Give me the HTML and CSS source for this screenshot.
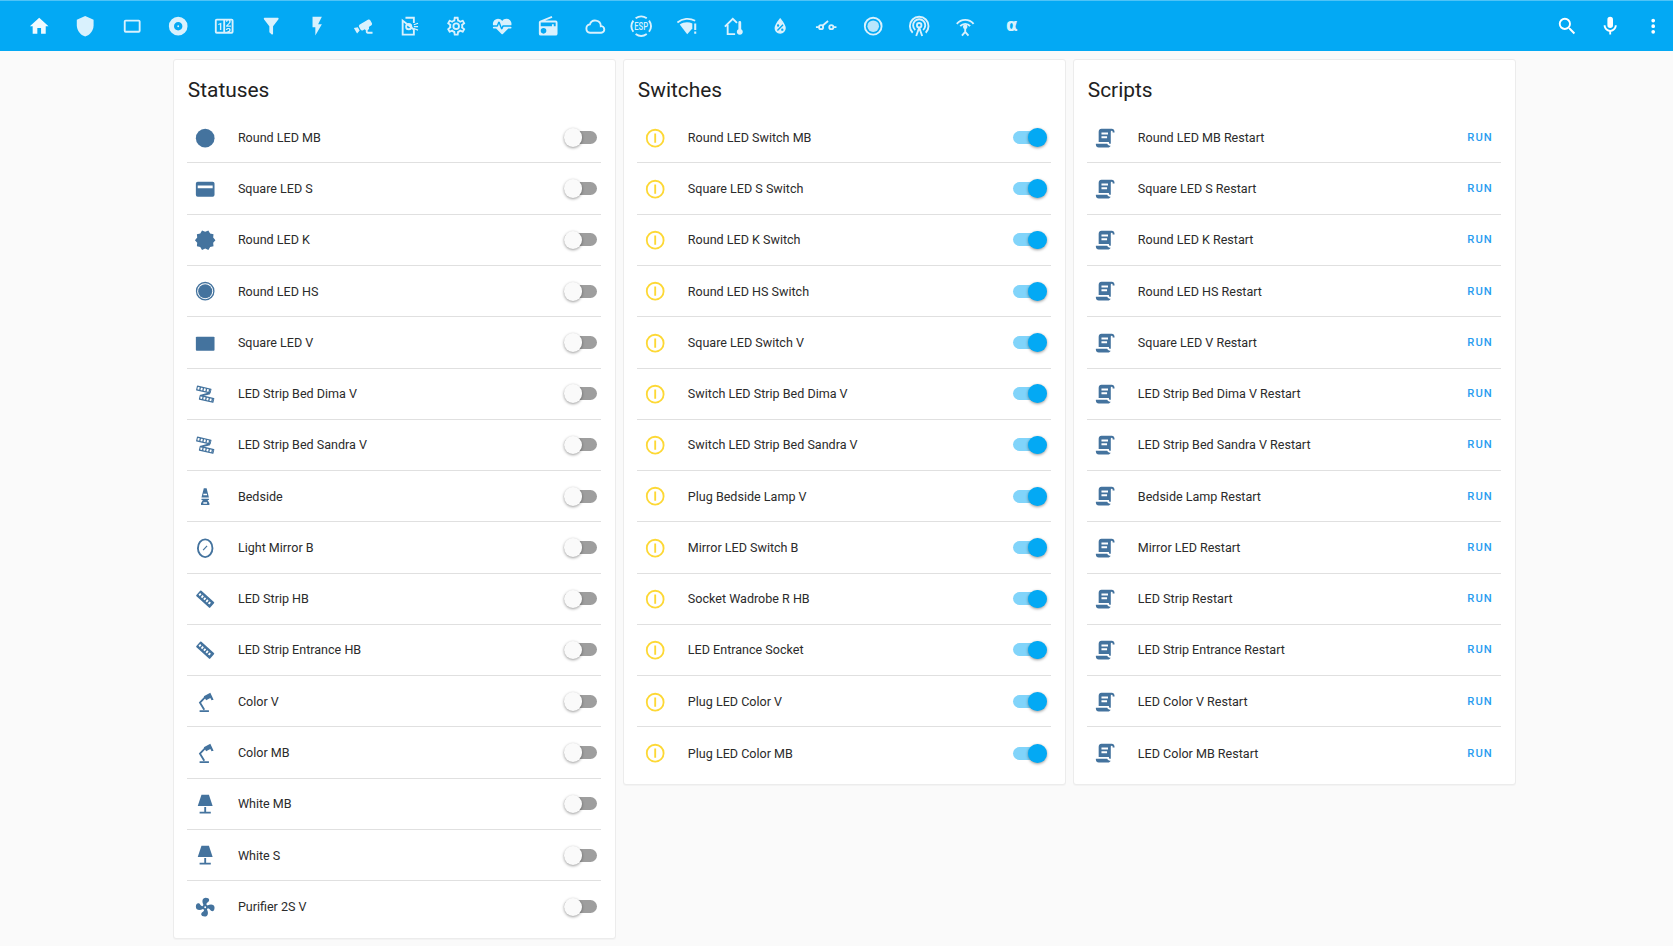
FILE: index.html
```html
<!DOCTYPE html>
<html lang="en">
<head>
    <meta charset="UTF-8">
    <title>Home Assistant</title>
    <link rel="stylesheet" href="styles.css">
</head>
<body>
    <svg class="defs" width="0" height="0">
        <symbol id="i-home" viewBox="0 0 24 24"><path d="M10,20V14H14V20H19V12H22L12,3L2,12H5V20H10Z"/></symbol>
        <symbol id="i-shield" viewBox="0 0 24 24"><path d="M12,1L3,5V11C3,16.55 6.84,21.74 12,23C17.16,21.74 21,16.55 21,11V5L12,1Z"/></symbol>
        <symbol id="i-crop" viewBox="0 0 24 24"><path d="M19,17H5V7H19M19,5H5A2,2 0 0,0 3,7V17A2,2 0 0,0 5,19H19A2,2 0 0,0 21,17V7C21,5.89 20.1,5 19,5Z"/></symbol>
        <symbol id="i-album" viewBox="0 0 24 24"><path d="M12,11A1,1 0 0,0 11,12A1,1 0 0,0 12,13A1,1 0 0,0 13,12A1,1 0 0,0 12,11M12,16.5C9.5,16.5 7.5,14.5 7.5,12C7.5,9.5 9.5,7.5 12,7.5C14.5,7.5 16.5,9.5 16.5,12C16.5,14.5 14.5,16.5 12,16.5M12,2A10,10 0 0,0 2,12A10,10 0 0,0 12,22A10,10 0 0,0 22,12A10,10 0 0,0 12,2Z"/></symbol>
        <symbol id="i-counter" viewBox="0 0 24 24"><path d="M4,4H20A2,2 0 0,1 22,6V18A2,2 0 0,1 20,20H4A2,2 0 0,1 2,18V6A2,2 0 0,1 4,4M4,6V18H11V6H4M20,18V6H18.76C19,6.54 18.95,7.07 18.95,7.13C18.88,7.8 18.41,8.5 18.24,8.75L15.91,11.3L19.23,11.28L19.24,12.5L14.04,12.47L14,11.47C14,11.47 17.05,8.24 17.2,7.95C17.34,7.67 17.91,6 16.5,6C15.27,6.05 15.41,7.3 15.41,7.3L13.87,7.31C13.87,7.31 13.88,6.65 14.25,6H13V18H15.58L15.57,17.14L16.54,17.13C16.54,17.13 17.45,16.97 17.46,16.08C17.5,15.08 16.65,15.08 16.5,15.08C16.37,15.08 15.43,15.13 15.43,15.95H13.91C13.91,15.95 13.95,13.89 16.5,13.89C19.1,13.89 18.96,15.91 18.96,15.91C18.96,15.91 19,17.16 17.85,17.63L18.37,18H20M8.92,16H7.42V10.2L5.62,10.76V9.53L8.76,8.41H8.92V16Z"/></symbol>
        <symbol id="i-filter" viewBox="0 0 24 24"><path d="M14,12V19.88C14.04,20.18 13.94,20.5 13.71,20.71C13.32,21.1 12.69,21.1 12.3,20.71L10.29,18.7C10.06,18.47 9.96,18.16 10,17.87V12H9.97L4.21,4.62C3.87,4.19 3.95,3.56 4.38,3.22C4.57,3.08 4.78,3 5,3H19C19.22,3 19.43,3.08 19.62,3.22C20.05,3.56 20.13,4.19 19.79,4.62L14.03,12H14Z"/></symbol>
        <symbol id="i-flash" viewBox="0 0 24 24"><path d="M7,2V13H10V22L17,10H13L17,2H7Z"/></symbol>
        <symbol id="i-cctv" viewBox="0 0 24 24"><path d="M18.15,4.94C17.77,4.91 17.37,5 17,5.2L8.35,10.2C7.39,10.76 7.07,12 7.62,12.94L9.12,15.53C9.67,16.5 10.89,16.82 11.85,16.27L13.65,15.23C13.92,15.69 14.32,16.06 14.81,16.27V18.04C14.81,19.13 15.71,20 16.81,20H22V18.04H16.81V16.27C17.72,15.87 18.31,14.97 18.31,14C18.31,13.54 18.19,13.11 17.97,12.73L20.5,11.27C21.47,10.71 21.8,9.5 21.24,8.53L19.74,5.94C19.4,5.34 18.79,5 18.15,4.94M6.22,13.17L2,13.87L2.75,15.17L4.75,18.63L5.5,19.93L8.22,16.63L6.22,13.17Z"/></symbol>
        <symbol id="i-sensor" viewBox="0 0 24 24"><g class="line"><path d="M8 3H17V8.5M17 15.5V21H5V6Z"/><circle cx="11.5" cy="12.5" r="2.8"/><path d="M17 10.5L21.5 8.8M17 12.5H21.5M17 14.5L21.5 16.2" stroke-width="1.3"/></g></symbol>
        <symbol id="i-gear" viewBox="0 0 24 24"><path d="M12,8A4,4 0 0,1 16,12A4,4 0 0,1 12,16A4,4 0 0,1 8,12A4,4 0 0,1 12,8M12,10A2,2 0 0,0 10,12A2,2 0 0,0 12,14A2,2 0 0,0 14,12A2,2 0 0,0 12,10M10,22C9.75,22 9.54,21.82 9.5,21.58L9.13,18.93C8.5,18.68 7.96,18.34 7.44,17.94L4.95,18.95C4.73,19.03 4.46,18.95 4.34,18.73L2.34,15.27C2.21,15.05 2.27,14.78 2.46,14.63L4.57,12.97L4.5,12L4.57,11L2.46,9.37C2.27,9.22 2.21,8.95 2.34,8.73L4.34,5.27C4.46,5.05 4.73,4.96 4.95,5.05L7.44,6.05C7.96,5.66 8.5,5.32 9.13,5.07L9.5,2.42C9.54,2.18 9.75,2 10,2H14C14.25,2 14.46,2.18 14.5,2.42L14.87,5.07C15.5,5.32 16.04,5.66 16.56,6.05L19.05,5.05C19.27,4.96 19.54,5.05 19.66,5.27L21.66,8.73C21.79,8.95 21.73,9.22 21.54,9.37L19.43,11L19.5,12L19.43,13L21.54,14.63C21.73,14.78 21.79,15.05 21.66,15.27L19.66,18.73C19.54,18.95 19.27,19.04 19.05,18.95L16.56,17.95C16.04,18.34 15.5,18.68 14.87,18.93L14.5,21.58C14.46,21.82 14.25,22 14,22H10M11.25,4L10.88,6.61C9.68,6.86 8.62,7.5 7.85,8.39L5.44,7.35L4.69,8.65L6.8,10.2C6.4,11.37 6.4,12.64 6.8,13.8L4.68,15.36L5.43,16.66L7.86,15.62C8.63,16.5 9.68,17.14 10.87,17.38L11.24,20H12.76L13.13,17.39C14.32,17.14 15.37,16.5 16.14,15.62L18.57,16.66L19.32,15.36L17.2,13.81C17.6,12.64 17.6,11.37 17.2,10.2L19.31,8.65L18.56,7.35L16.15,8.39C15.38,7.5 14.32,6.86 13.12,6.62L12.75,4H11.25Z"/></symbol>
        <symbol id="i-heart" viewBox="0 0 24 24"><path d="M7.5,4A5.5,5.5 0 0,0 2,9.5C2,10 2.09,10.5 2.22,11H6.3L7.57,7.63C7.87,6.83 9.05,6.75 9.43,7.63L11.5,13L12.09,11.58C12.22,11.25 12.57,11 13,11H21.78C21.91,10.5 22,10 22,9.5A5.5,5.5 0 0,0 16.5,4C14.64,4 13,4.93 12,6.34C11,4.93 9.36,4 7.5,4V4M3,12.5A1,1 0 0,0 2,13.5A1,1 0 0,0 3,14.5H5.44L11,20C12,20.9 12,20.9 13,20L18.56,14.5H21A1,1 0 0,0 22,13.5A1,1 0 0,0 21,12.5H13.4L12.47,14.8C12.07,15.81 10.92,15.67 10.55,14.83L8.5,9.5L7.54,11.83C7.39,12.21 7.05,12.5 6.6,12.5H3Z"/></symbol>
        <symbol id="i-radio" viewBox="0 0 24 24"><path d="M20,6A2,2 0 0,1 22,8V20A2,2 0 0,1 20,22H4A2,2 0 0,1 2,20V8C2,7.15 2.53,6.42 3.28,6.13L15.71,1L16.47,2.83L8.83,6H20M20,8H4V12H16V10H18V12H20V8M7,14A3,3 0 0,0 4,17A3,3 0 0,0 7,20A3,3 0 0,0 10,17A3,3 0 0,0 7,14Z"/></symbol>
        <symbol id="i-cloud" viewBox="0 0 24 24"><g class="line" stroke-width="1.7"><path d="M6.5 19H18.5A3.5 3.5 0 0 0 18 12A6 6 0 0 0 6.3 10.1A4.5 4.5 0 0 0 6.5 19Z"/></g></symbol>
        <symbol id="i-wifi" viewBox="0 0 24 24"><g class="line" stroke-width="1.8"><path d="M1.5 8C7 3.5 14.5 3 20.5 6.2"/></g><path d="M12 20.5L4 10.2C8 7.2 13.5 7 17.5 9V14.5Z"/><path d="M19.5 9H21.7V16H19.5ZM19.5 17.8H21.7V20H19.5Z"/></symbol>
        <symbol id="i-homet" viewBox="0 0 24 24"><g class="line"><path d="M2 12.5L10.5 4L15 8.5M5 10.5V20.5H13"/></g><path d="M16.5 8A1.5 1.5 0 0 1 19.5 8V15.2A3.2 3.2 0 1 1 16.5 15.2Z"/></symbol>
        <symbol id="i-water" viewBox="0 0 24 24"><path d="M12,3.25C12,3.25 6,10 6,14C6,17.32 8.69,20 12,20A6,6 0 0,0 18,14C18,10 12,3.25 12,3.25M14.47,9.97L15.53,11.03L9.53,17.03L8.47,15.97M9.75,10A1.25,1.25 0 0,1 11,11.25A1.25,1.25 0 0,1 9.75,12.5A1.25,1.25 0 0,1 8.5,11.25A1.25,1.25 0 0,1 9.75,10M14.25,14.5A1.25,1.25 0 0,1 15.5,15.75A1.25,1.25 0 0,1 14.25,17A1.25,1.25 0 0,1 13,15.75A1.25,1.25 0 0,1 14.25,14.5Z"/></symbol>
        <symbol id="i-eswitch" viewBox="0 0 24 24"><g class="line" stroke-width="1.8"><circle cx="6.5" cy="13" r="2.2"/><circle cx="17.5" cy="13" r="2.2"/><path d="M8 11.5L14 6.5M1 13H4M20 13H23"/></g></symbol>
        <symbol id="i-radiobox" viewBox="0 0 24 24"><path d="M12,20A8,8 0 0,1 4,12A8,8 0 0,1 12,4A8,8 0 0,1 20,12A8,8 0 0,1 12,20M12,2A10,10 0 0,0 2,12A10,10 0 0,0 12,22A10,10 0 0,0 22,12A10,10 0 0,0 12,2"/><circle class="pale" cx="12" cy="12" r="6.2"/></symbol>
        <symbol id="i-cast" viewBox="0 0 24 24"><g class="line" stroke-width="1.7"><path d="M5 19A10 10 0 1 1 19 19"/><path d="M7.8 16A6.5 6.5 0 1 1 16.2 16"/><circle cx="12" cy="11" r="2.4"/><path d="M12 13.5L8.8 22.5M12 13.5L15.2 22.5"/></g></symbol>
        <symbol id="i-antenna" viewBox="0 0 24 24"><g class="line" stroke-width="1.8"><path d="M3 9.5A11.5 11.5 0 0 1 21 9.5"/><path d="M6.7 12A7 7 0 0 1 17.3 12"/><path d="M12 14V18L8.5 22M12 18L15.5 22"/></g><circle cx="12" cy="12.5" r="2.4"/></symbol>
        <symbol id="i-search" viewBox="0 0 24 24"><path d="M9.5,3A6.5,6.5 0 0,1 16,9.5C16,11.11 15.41,12.59 14.44,13.73L14.71,14H15.5L20.5,19L19,20.5L14,15.5V14.71L13.73,14.44C12.59,15.41 11.11,16 9.5,16A6.5,6.5 0 0,1 3,9.5A6.5,6.5 0 0,1 9.5,3M9.5,5C7,5 5,7 5,9.5C5,12 7,14 9.5,14C12,14 14,12 14,9.5C14,7 12,5 9.5,5Z"/></symbol>
        <symbol id="i-mic" viewBox="0 0 24 24"><path d="M12,2A3,3 0 0,1 15,5V11A3,3 0 0,1 12,14A3,3 0 0,1 9,11V5A3,3 0 0,1 12,2M19,11C19,14.53 16.39,17.44 13,17.93V21H11V17.93C7.61,17.44 5,14.53 5,11H7A5,5 0 0,0 12,16A5,5 0 0,0 17,11H19Z"/></symbol>
        <symbol id="i-dots" viewBox="0 0 24 24"><path d="M12,16A2,2 0 0,1 14,18A2,2 0 0,1 12,20A2,2 0 0,1 10,18A2,2 0 0,1 12,16M12,10A2,2 0 0,1 14,12A2,2 0 0,1 12,14A2,2 0 0,1 10,12A2,2 0 0,1 12,10M12,4A2,2 0 0,1 14,6A2,2 0 0,1 12,8A2,2 0 0,1 10,6A2,2 0 0,1 12,4Z"/></symbol>

        <symbol id="i-circle" viewBox="0 0 24 24"><circle cx="12" cy="12" r="10"/></symbol>
        <symbol id="i-card" viewBox="0 0 24 24"><path fill-rule="evenodd" d="M4 4H20A2 2 0 0 1 22 6V18A2 2 0 0 1 20 20H4A2 2 0 0 1 2 18V6A2 2 0 0 1 4 4ZM4 8V11H20V8Z"/></symbol>
        <symbol id="i-decagram" viewBox="0 0 24 24"><path d="M23,12L20.56,9.22L20.9,5.54L17.29,4.72L15.4,1.54L12,3L8.6,1.54L6.71,4.72L3.1,5.53L3.44,9.21L1,12L3.44,14.78L3.1,18.47L6.71,19.29L8.6,22.47L12,21L15.4,22.46L17.29,19.28L20.9,18.46L20.56,14.78L23,12Z"/></symbol>
        <symbol id="i-ring" viewBox="0 0 24 24"><path fill-rule="evenodd" d="M12 2A10 10 0 1 1 12 22A10 10 0 1 1 12 2ZM12 3.4A8.6 8.6 0 1 0 12 20.6A8.6 8.6 0 1 0 12 3.4Z"/><circle cx="12" cy="12" r="7.5"/></symbol>
        <symbol id="i-rect" viewBox="0 0 24 24"><rect x="2" y="5" width="20" height="15" rx="1"/></symbol>
        <symbol id="i-strip" viewBox="0 0 24 24"><g transform="rotate(13 10.5 7)"><rect x="2.5" y="4.3" width="16" height="5.4" rx=".6"/><path class="holes" d="M3.7 7H17.5"/></g><g transform="rotate(13 13.5 17)"><rect x="5.5" y="14.3" width="16" height="5.4" rx=".6"/><path class="holes" d="M6.7 17H20.5"/></g><g class="line" stroke-width="1.5"><path d="M17 11L7.5 13.5"/></g></symbol>
        <symbol id="i-strip-d" viewBox="0 0 24 24"><g transform="rotate(42 12 12)"><rect x="2" y="8" width="20" height="8" rx="1"/><path class="holes" d="M3.5 12H20.5"/></g></symbol>
        <symbol id="i-bedside" viewBox="0 0 24 24"><path d="M10.5 3.5H13.5L16 13.5H8ZM8 14.8H16V16.2H14.5L16.5 19.5V21.5H7.5V19.5L9.5 16.2H8Z"/><path class="cut" d="M10 9.5H14V11H10ZM10 18.5H14V20H10Z"/></symbol>
        <symbol id="i-mirror" viewBox="0 0 24 24"><g class="line" stroke-width="2"><ellipse cx="12" cy="12" rx="7.8" ry="9.5"/><path d="M9.8 14L14 9.6" stroke-width="1.3"/></g></symbol>
        <symbol id="i-desk" viewBox="0 0 24 24"><path d="M10.5 5.5L17.5 2L21 9.5L18.8 10L17.5 7.5L13 9.8Z"/><g class="line" stroke-width="2"><path d="M12 6.5L6.4 12.5L11 20"/><path d="M6 21.5H16"/></g></symbol>
        <symbol id="i-lamp" viewBox="0 0 24 24"><path d="M8,2H16L20,14H4L8,2M11,15H13V20H18V22H6V20H11V15Z"/></symbol>
        <symbol id="i-fan" viewBox="0 0 24 24"><path d="M12,11A1,1 0 0,0 11,12A1,1 0 0,0 12,13A1,1 0 0,0 13,12A1,1 0 0,0 12,11M12.5,2C17,2 17.11,5.57 14.75,6.75C13.76,7.24 13.32,8.29 13.13,9.22C13.61,9.42 14.03,9.73 14.35,10.13C18.05,8.13 22.03,8.92 22.03,12.5C22.03,17 18.46,17.1 17.28,14.73C16.78,13.74 15.72,13.3 14.79,13.11C14.59,13.59 14.28,14 13.88,14.34C15.87,18.03 15.08,22 11.5,22C7,22 6.91,18.42 9.27,17.24C10.25,16.75 10.69,15.71 10.89,14.79C10.4,14.59 9.97,14.27 9.65,13.87C5.96,15.85 2,15.07 2,11.5C2,7 5.56,6.89 6.74,9.26C7.24,10.25 8.29,10.68 9.22,10.87C9.41,10.39 9.73,9.97 10.14,9.65C8.15,5.96 8.94,2 12.5,2Z"/></symbol>
        <symbol id="i-info" viewBox="0 0 24 24"><path d="M12,20C7.59,20 4,16.41 4,12C4,7.59 7.59,4 12,4C16.41,4 20,7.59 20,12C20,16.41 16.41,20 12,20M12,2A10,10 0 0,0 2,12A10,10 0 0,0 12,22A10,10 0 0,0 22,12A10,10 0 0,0 12,2M11,7H13V17H11Z"/></symbol>
        <symbol id="i-script" viewBox="0 0 24 24"><path d="M17.8,20C17.4,21.2 16.3,22 15,22H5C3.3,22 2,20.7 2,19V18H5L14.2,18C14.6,19.2 15.7,20 17,20H17.8M19,2C20.7,2 22,3.3 22,5V6H20V5C20,4.4 19.6,4 19,4C18.4,4 18,4.4 18,5V18H17C16.4,18 16,17.6 16,17V16H5V5C5,3.3 6.3,2 8,2H19M8,6V8H15V6H8M8,10V12H14V10H8Z"/></symbol>
    </svg>

    <header class="topbar">
        <nav class="tabs">
            <a class="tab"><svg class="icon"><use href="#i-home"/></svg></a>
            <a class="tab"><svg class="icon"><use href="#i-shield"/></svg></a>
            <a class="tab"><svg class="icon"><use href="#i-crop"/></svg></a>
            <a class="tab"><svg class="icon"><use href="#i-album"/></svg></a>
            <a class="tab"><svg class="icon"><use href="#i-counter"/></svg></a>
            <a class="tab"><svg class="icon"><use href="#i-filter"/></svg></a>
            <a class="tab"><svg class="icon"><use href="#i-flash"/></svg></a>
            <a class="tab"><svg class="icon"><use href="#i-cctv"/></svg></a>
            <a class="tab"><svg class="icon"><use href="#i-sensor"/></svg></a>
            <a class="tab"><svg class="icon"><use href="#i-gear"/></svg></a>
            <a class="tab"><svg class="icon"><use href="#i-heart"/></svg></a>
            <a class="tab"><svg class="icon"><use href="#i-radio"/></svg></a>
            <a class="tab"><svg class="icon"><use href="#i-cloud"/></svg></a>
            <a class="tab">
                <svg class="icon" viewBox="0 0 24 24">
                    <g class="line" stroke-width="1.5"><path d="M6 3.6A10.3 10.3 0 0 1 18 3.6M6 20.4A10.3 10.3 0 0 0 18 20.4M3.6 6A10.3 10.3 0 0 0 3.6 18M20.4 6A10.3 10.3 0 0 1 20.4 18"/></g>
                    <text class="esp-text" text-anchor="middle" transform="translate(12 16.5) scale(0.65 1)">ESP</text>
                </svg>
            </a>
            <a class="tab"><svg class="icon"><use href="#i-wifi"/></svg></a>
            <a class="tab"><svg class="icon"><use href="#i-homet"/></svg></a>
            <a class="tab"><svg class="icon"><use href="#i-water"/></svg></a>
            <a class="tab"><svg class="icon"><use href="#i-eswitch"/></svg></a>
            <a class="tab"><svg class="icon"><use href="#i-radiobox"/></svg></a>
            <a class="tab"><svg class="icon"><use href="#i-cast"/></svg></a>
            <a class="tab"><svg class="icon"><use href="#i-antenna"/></svg></a>
            <a class="tab tab-alpha">α</a>
        </nav>
        <div class="actions">
            <a class="action"><svg class="icon"><use href="#i-search"/></svg></a>
            <a class="action"><svg class="icon"><use href="#i-mic"/></svg></a>
            <a class="action"><svg class="icon"><use href="#i-dots"/></svg></a>
        </div>
    </header>

    <main class="columns">
        <section class="card">
            <h2 class="card-title">Statuses</h2>
            <div class="row"><svg class="icon row-icon"><use href="#i-circle"/></svg><span class="name">Round LED MB</span><span class="toggle"></span></div>
            <div class="row"><svg class="icon row-icon"><use href="#i-card"/></svg><span class="name">Square LED S</span><span class="toggle"></span></div>
            <div class="row"><svg class="icon row-icon"><use href="#i-decagram"/></svg><span class="name">Round LED K</span><span class="toggle"></span></div>
            <div class="row"><svg class="icon row-icon"><use href="#i-ring"/></svg><span class="name">Round LED HS</span><span class="toggle"></span></div>
            <div class="row"><svg class="icon row-icon"><use href="#i-rect"/></svg><span class="name">Square LED V</span><span class="toggle"></span></div>
            <div class="row"><svg class="icon row-icon"><use href="#i-strip"/></svg><span class="name">LED Strip Bed Dima V</span><span class="toggle"></span></div>
            <div class="row"><svg class="icon row-icon"><use href="#i-strip"/></svg><span class="name">LED Strip Bed Sandra V</span><span class="toggle"></span></div>
            <div class="row"><svg class="icon row-icon"><use href="#i-bedside"/></svg><span class="name">Bedside</span><span class="toggle"></span></div>
            <div class="row"><svg class="icon row-icon"><use href="#i-mirror"/></svg><span class="name">Light Mirror B</span><span class="toggle"></span></div>
            <div class="row"><svg class="icon row-icon"><use href="#i-strip-d"/></svg><span class="name">LED Strip HB</span><span class="toggle"></span></div>
            <div class="row"><svg class="icon row-icon"><use href="#i-strip-d"/></svg><span class="name">LED Strip Entrance HB</span><span class="toggle"></span></div>
            <div class="row"><svg class="icon row-icon"><use href="#i-desk"/></svg><span class="name">Color V</span><span class="toggle"></span></div>
            <div class="row"><svg class="icon row-icon"><use href="#i-desk"/></svg><span class="name">Color MB</span><span class="toggle"></span></div>
            <div class="row"><svg class="icon row-icon"><use href="#i-lamp"/></svg><span class="name">White MB</span><span class="toggle"></span></div>
            <div class="row"><svg class="icon row-icon"><use href="#i-lamp"/></svg><span class="name">White S</span><span class="toggle"></span></div>
            <div class="row"><svg class="icon row-icon"><use href="#i-fan"/></svg><span class="name">Purifier 2S V</span><span class="toggle"></span></div>
        </section>

        <section class="card">
            <h2 class="card-title">Switches</h2>
            <div class="row"><svg class="icon row-icon info"><use href="#i-info"/></svg><span class="name">Round LED Switch MB</span><span class="toggle on"></span></div>
            <div class="row"><svg class="icon row-icon info"><use href="#i-info"/></svg><span class="name">Square LED S Switch</span><span class="toggle on"></span></div>
            <div class="row"><svg class="icon row-icon info"><use href="#i-info"/></svg><span class="name">Round LED K Switch</span><span class="toggle on"></span></div>
            <div class="row"><svg class="icon row-icon info"><use href="#i-info"/></svg><span class="name">Round LED HS Switch</span><span class="toggle on"></span></div>
            <div class="row"><svg class="icon row-icon info"><use href="#i-info"/></svg><span class="name">Square LED Switch V</span><span class="toggle on"></span></div>
            <div class="row"><svg class="icon row-icon info"><use href="#i-info"/></svg><span class="name">Switch LED Strip Bed Dima V</span><span class="toggle on"></span></div>
            <div class="row"><svg class="icon row-icon info"><use href="#i-info"/></svg><span class="name">Switch LED Strip Bed Sandra V</span><span class="toggle on"></span></div>
            <div class="row"><svg class="icon row-icon info"><use href="#i-info"/></svg><span class="name">Plug Bedside Lamp V</span><span class="toggle on"></span></div>
            <div class="row"><svg class="icon row-icon info"><use href="#i-info"/></svg><span class="name">Mirror LED Switch B</span><span class="toggle on"></span></div>
            <div class="row"><svg class="icon row-icon info"><use href="#i-info"/></svg><span class="name">Socket Wadrobe R HB</span><span class="toggle on"></span></div>
            <div class="row"><svg class="icon row-icon info"><use href="#i-info"/></svg><span class="name">LED Entrance Socket</span><span class="toggle on"></span></div>
            <div class="row"><svg class="icon row-icon info"><use href="#i-info"/></svg><span class="name">Plug LED Color V</span><span class="toggle on"></span></div>
            <div class="row"><svg class="icon row-icon info"><use href="#i-info"/></svg><span class="name">Plug LED Color MB</span><span class="toggle on"></span></div>
        </section>

        <section class="card">
            <h2 class="card-title">Scripts</h2>
            <div class="row"><svg class="icon row-icon"><use href="#i-script"/></svg><span class="name">Round LED MB Restart</span><a class="run">RUN</a></div>
            <div class="row"><svg class="icon row-icon"><use href="#i-script"/></svg><span class="name">Square LED S Restart</span><a class="run">RUN</a></div>
            <div class="row"><svg class="icon row-icon"><use href="#i-script"/></svg><span class="name">Round LED K Restart</span><a class="run">RUN</a></div>
            <div class="row"><svg class="icon row-icon"><use href="#i-script"/></svg><span class="name">Round LED HS Restart</span><a class="run">RUN</a></div>
            <div class="row"><svg class="icon row-icon"><use href="#i-script"/></svg><span class="name">Square LED V Restart</span><a class="run">RUN</a></div>
            <div class="row"><svg class="icon row-icon"><use href="#i-script"/></svg><span class="name">LED Strip Bed Dima V Restart</span><a class="run">RUN</a></div>
            <div class="row"><svg class="icon row-icon"><use href="#i-script"/></svg><span class="name">LED Strip Bed Sandra V Restart</span><a class="run">RUN</a></div>
            <div class="row"><svg class="icon row-icon"><use href="#i-script"/></svg><span class="name">Bedside Lamp Restart</span><a class="run">RUN</a></div>
            <div class="row"><svg class="icon row-icon"><use href="#i-script"/></svg><span class="name">Mirror LED Restart</span><a class="run">RUN</a></div>
            <div class="row"><svg class="icon row-icon"><use href="#i-script"/></svg><span class="name">LED Strip Restart</span><a class="run">RUN</a></div>
            <div class="row"><svg class="icon row-icon"><use href="#i-script"/></svg><span class="name">LED Strip Entrance Restart</span><a class="run">RUN</a></div>
            <div class="row"><svg class="icon row-icon"><use href="#i-script"/></svg><span class="name">LED Color V Restart</span><a class="run">RUN</a></div>
            <div class="row"><svg class="icon row-icon"><use href="#i-script"/></svg><span class="name">LED Color MB Restart</span><a class="run">RUN</a></div>
        </section>
    </main>
</body>
</html>
```

FILE: styles.css
```css
* {
    box-sizing: border-box;
}

html, body {
    height: 100%;
}

body {
    margin: 0;
    overflow: hidden;
    background-color: #fafafa;
    color: #2b2b2b;
    font-family: Roboto, "Liberation Sans", sans-serif;
    font-size: 12.55px;
}

.defs {
    position: absolute;
}

.icon {
    display: block;
    width: 22.4px;
    height: 22.4px;
    fill: currentColor;
    flex: none;
}

.line {
    fill: none;
    stroke: currentColor;
    stroke-width: 2;
}

.cut {
    fill: #fff;
}

.pale {
    opacity: 0.85;
}

.holes {
    fill: none;
    stroke: #fff;
    stroke-width: 2.6;
    stroke-dasharray: 2 1.4;
}

.esp-text {
    font-size: 12.5px;
    font-weight: 500;
    font-family: Roboto, sans-serif;
}

.topbar {
    display: flex;
    align-items: center;
    justify-content: space-between;
    height: 51px;
    padding-left: 15.9px;
    background-color: #03a9f4;
    border-top: 1px solid #4fc3f7;
    color: #fff;
}

.tabs {
    display: flex;
}

.tab {
    display: flex;
    align-items: center;
    justify-content: center;
    width: 46.33px;
    height: 44px;
    color: #d9f1fd;
}

.tab:first-child {
    color: #f0faff;
}

.tab-alpha {
    padding-bottom: 2px;
    font-family: "DejaVu Sans", sans-serif;
    font-size: 17px;
    font-weight: 700;
}

.actions {
    display: flex;
    gap: 3.9px;
}

.action {
    display: flex;
    align-items: center;
    justify-content: center;
    width: 39.4px;
    height: 44px;
}

.columns {
    display: grid;
    grid-template-columns: repeat(3, 443.4px);
    column-gap: 6.6px;
    align-items: start;
    padding: 8.3px 0 0 172.8px;
}

.card {
    padding: 0 14.4px 5.3px 13px;
    background-color: #fff;
    border: 1px solid #ececec;
    border-radius: 3px;
    box-shadow: 0 1px 1px rgba(0, 0, 0, 0.03);
}

.card-title {
    height: 51.9px;
    margin: 0;
    padding: 15px 0 0 1px;
    font-size: 20.9px;
    font-weight: 400;
    line-height: 30px;
    color: #212121;
}

.row {
    display: flex;
    align-items: center;
    height: 51.27px;
    padding: 0 4.3px 0 6.9px;
    border-bottom: 1px solid #e0e0e0;
}

.row:last-child {
    border-bottom: none;
}

.row-icon {
    margin-top: 1px;
    color: #44739e;
}

.row-icon.info {
    color: #fdd835;
}

.name {
    flex: 1;
    margin-left: 21.8px;
}

.toggle {
    position: relative;
    width: 33px;
    height: 13px;
    border-radius: 7px;
    background-color: #9e9e9e;
}

.toggle::after {
    content: "";
    position: absolute;
    top: -2.7px;
    left: 0;
    width: 18.7px;
    height: 18.7px;
    border-radius: 50%;
    background-color: #fafafa;
    box-shadow: 0 1px 3px rgba(0, 0, 0, 0.4);
}

.toggle.on {
    background-color: #81d4fa;
}

.toggle.on::after {
    left: 15px;
    background-color: #03a9f4;
}

.run {
    margin-right: 3.8px;
    font-size: 11.2px;
    font-weight: 500;
    letter-spacing: 1px;
    color: #2a9df0;
}
```
